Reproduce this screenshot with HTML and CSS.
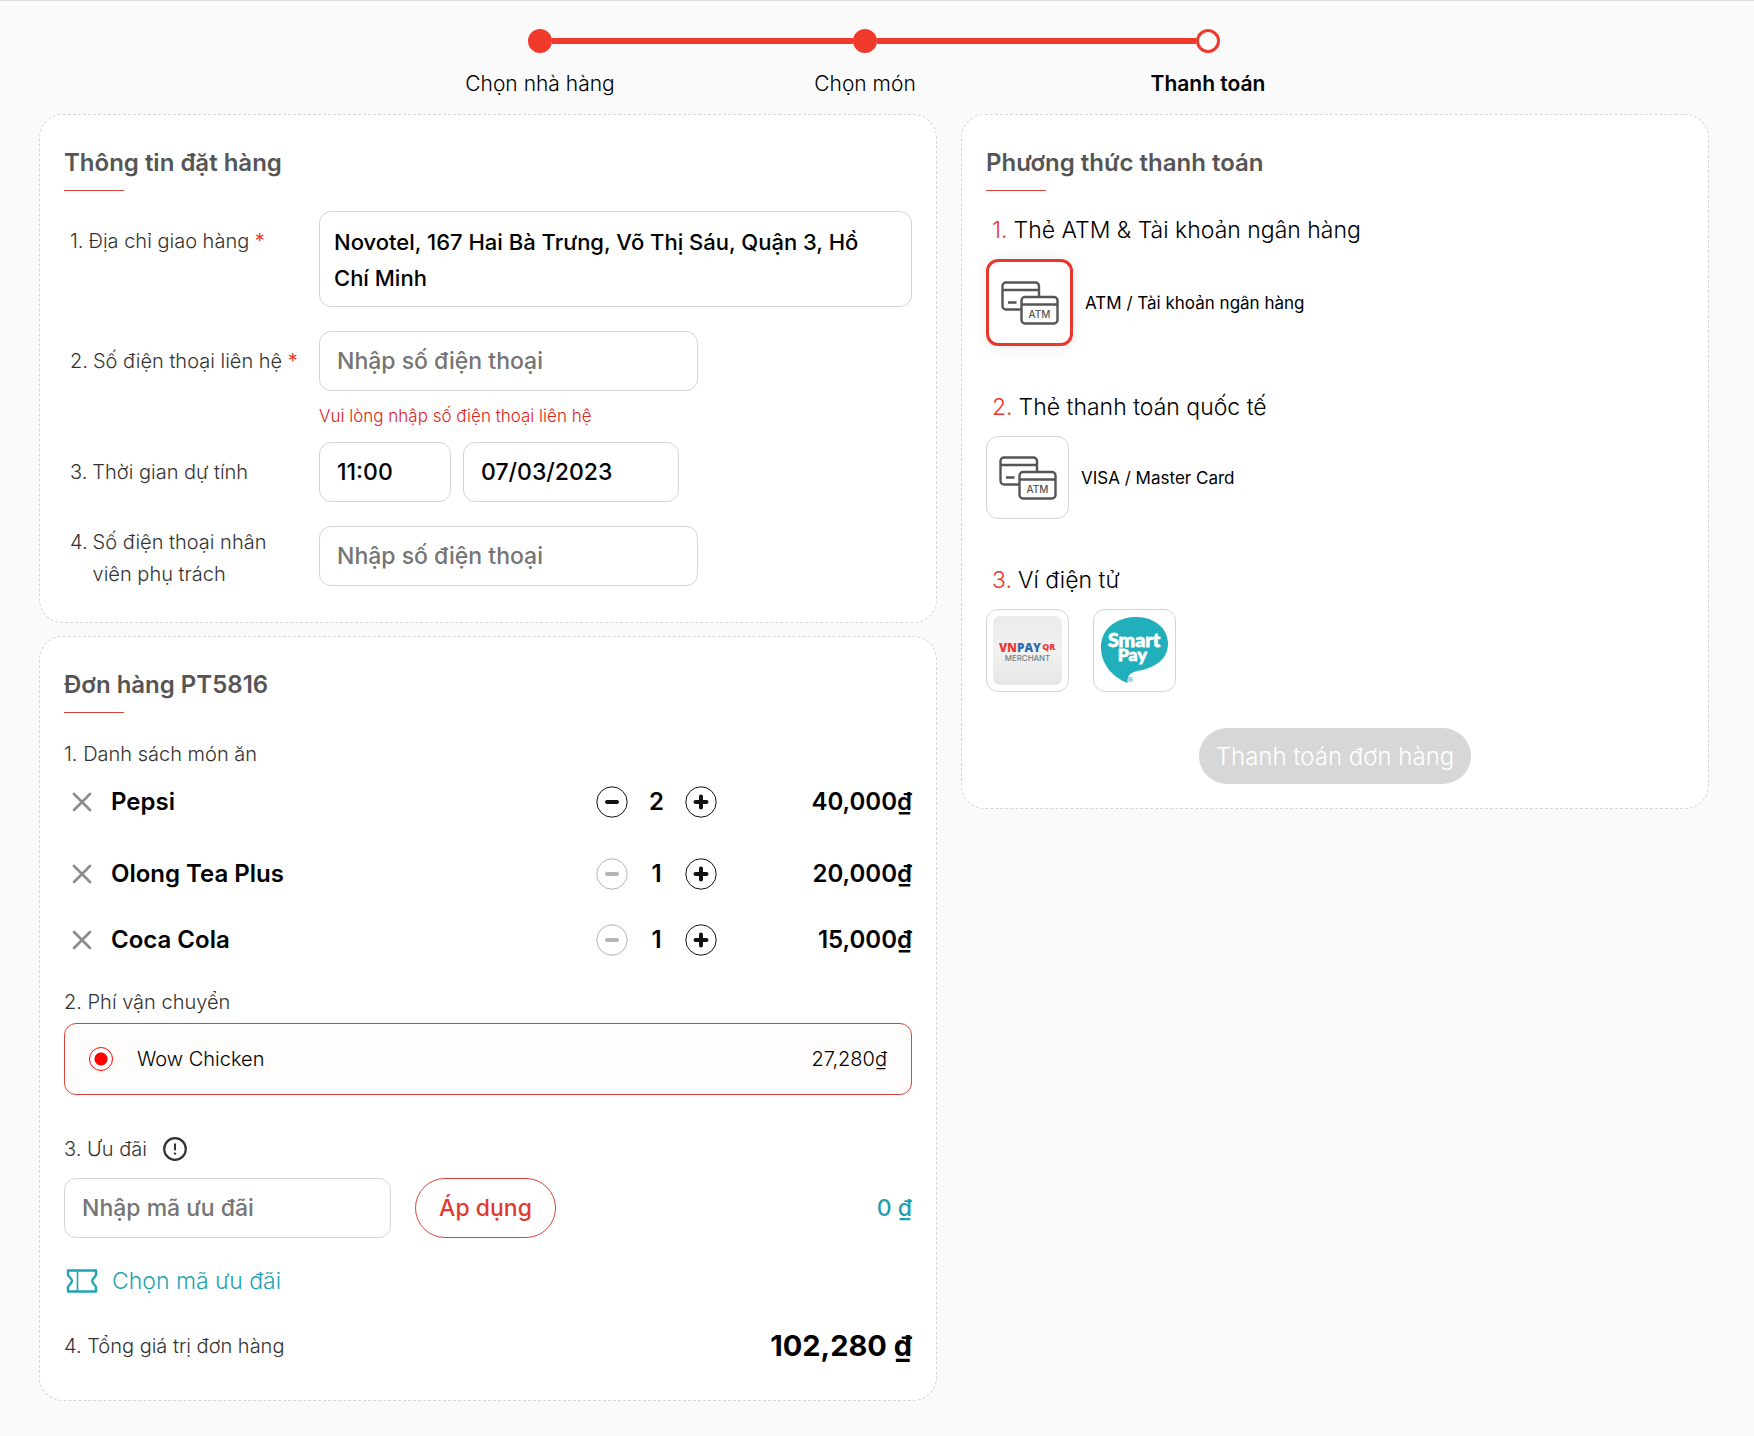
FILE: index.html
```html
<!DOCTYPE html>
<html lang="vi">
<head>
<meta charset="utf-8">
<meta name="viewport" content="width=device-width, initial-scale=1">
<title>Thanh toán</title>
<link rel="stylesheet" href="styles.css">
</head>
<body>
<svg class="sprite" aria-hidden="true">
  <symbol id="i-close" viewBox="0 0 20 20"><path d="M2 2l16 16M18 2L2 18" fill="none" stroke="currentColor" stroke-width="2.6" stroke-linecap="round"/></symbol>
  <symbol id="i-minus" viewBox="0 0 32 32"><circle cx="16" cy="16" r="15.2" fill="none" stroke="currentColor" stroke-width="1"/><path d="M11 16h10" stroke="currentColor" stroke-width="4" stroke-linecap="round"/></symbol>
  <symbol id="i-plus" viewBox="0 0 32 32"><circle cx="16" cy="16" r="15.2" fill="none" stroke="currentColor" stroke-width="1"/><path d="M10.500 16h11M16 10.500v11" stroke="currentColor" stroke-width="4" stroke-linecap="round"/></symbol>
  <symbol id="i-cards" viewBox="0 0 58 44">
    <g fill="none" stroke="#555" stroke-width="2.4">
      <path d="M20 28.500H5a3.500 3.500 0 0 1-3.500-3.500V5A3.500 3.500 0 0 1 5 1.500h29.500A3.500 3.500 0 0 1 38 5v10.500M1.500 9H38M7 21.500h8.500"/>
      <rect x="20.500" y="16" width="36" height="26.500" rx="3.500"/>
      <path d="M20.500 23.500h36"/>
    </g>
    <text x="38.500" y="37" text-anchor="middle" font-family="Inter, sans-serif" font-size="10" font-weight="500" fill="#555">ATM</text>
  </symbol>
</svg>

<main class="page">
  <ol class="stepper">
    <li class="step"><span class="track"><i class="dot"></i></span>Chọn nhà hàng</li>
    <li class="step"><span class="track"><i class="dot"></i></span>Chọn món</li>
    <li class="step current"><span class="track"><i class="dot"></i></span>Thanh toán</li>
  </ol>

  <div class="columns">
    <div class="column">
      <section class="card">
        <h2 class="title">Thông tin đặt hàng</h2>
        <form class="form">
          <label class="label" for="address"><span>1.</span><span>Địa chỉ giao hàng <b class="req">*</b></span></label>
          <textarea class="input address" id="address" rows="2">Novotel, 167 Hai Bà Trưng, Võ Thị Sáu, Quận 3, Hồ Chí Minh</textarea>

          <label class="label" for="phone"><span>2.</span><span>Số điện thoại liên hệ <b class="req">*</b></span></label>
          <div class="field">
            <input class="input phone" id="phone" type="tel" placeholder="Nhập số điện thoại">
            <p class="error">Vui lòng nhập số điện thoại liên hệ</p>
          </div>

          <label class="label" for="time"><span>3.</span><span>Thời gian dự tính</span></label>
          <div class="times">
            <input class="input time" id="time" type="text" value="11:00">
            <input class="input date" type="text" value="07/03/2023" aria-label="Ngày">
          </div>

          <label class="label two-line" for="staff"><span>4.</span><span>Số điện thoại nhân viên phụ trách</span></label>
          <input class="input phone" id="staff" type="tel" placeholder="Nhập số điện thoại">
        </form>
      </section>

      <section class="card order">
        <h2 class="title">Đơn hàng PT5816</h2>
        <h3 class="sub">1. Danh sách món ăn</h3>
        <ul class="items">
          <li class="item first">
            <button class="icon-btn remove" aria-label="Xóa Pepsi"><svg><use href="#i-close"/></svg></button>
            <span class="name">Pepsi</span>
            <button class="icon-btn qty-btn" aria-label="Giảm"><svg><use href="#i-minus"/></svg></button>
            <span class="qty">2</span>
            <button class="icon-btn qty-btn" aria-label="Tăng"><svg><use href="#i-plus"/></svg></button>
            <span class="price">40,000₫</span>
          </li>
          <li class="item">
            <button class="icon-btn remove" aria-label="Xóa Olong Tea Plus"><svg><use href="#i-close"/></svg></button>
            <span class="name">Olong Tea Plus</span>
            <button class="icon-btn qty-btn" aria-label="Giảm" disabled><svg><use href="#i-minus"/></svg></button>
            <span class="qty">1</span>
            <button class="icon-btn qty-btn" aria-label="Tăng"><svg><use href="#i-plus"/></svg></button>
            <span class="price">20,000₫</span>
          </li>
          <li class="item">
            <button class="icon-btn remove" aria-label="Xóa Coca Cola"><svg><use href="#i-close"/></svg></button>
            <span class="name">Coca Cola</span>
            <button class="icon-btn qty-btn" aria-label="Giảm" disabled><svg><use href="#i-minus"/></svg></button>
            <span class="qty">1</span>
            <button class="icon-btn qty-btn" aria-label="Tăng"><svg><use href="#i-plus"/></svg></button>
            <span class="price">15,000₫</span>
          </li>
        </ul>

        <h3 class="sub">2. Phí vận chuyển</h3>
        <label class="shipping">
          <input class="radio" type="radio" name="shipping" checked>
          <span class="shop">Wow Chicken</span>
          <span>27,280₫</span>
        </label>

        <h3 class="sub promo-title"><label for="promo">3. Ưu đãi</label>
          <svg class="info" viewBox="0 0 24 24" aria-hidden="true"><circle cx="12" cy="12" r="10.800" fill="none" stroke="currentColor" stroke-width="2.200"/><path d="M12 6.500v6.800" stroke="currentColor" stroke-width="2"/><circle cx="12" cy="16.600" r="1.200" fill="currentColor"/></svg>
        </h3>
        <div class="promo">
          <input class="input code" id="promo" type="text" placeholder="Nhập mã ưu đãi">
          <button class="apply">Áp dụng</button>
          <span class="discount">0 ₫</span>
        </div>
        <a class="choose" href="#">
          <svg class="ticket" viewBox="0 0 32 24" aria-hidden="true"><path d="M2 1.500h28v4.500c0 1-3.800 3.500-3.800 6s3.800 5 3.800 6v4.500H2V18c0-1 4-3.500 4-6S2 7 2 6z" fill="none" stroke="currentColor" stroke-width="2.400" stroke-linejoin="round"/><path d="M11.500 1.500v21" stroke="currentColor" stroke-width="1.600"/></svg>
          Chọn mã ưu đãi
        </a>
        <div class="total"><h3 class="sub">4. Tổng giá trị đơn hàng</h3><strong class="sum">102,280 ₫</strong></div>
      </section>
    </div>

    <section class="card payment">
      <h2 class="title">Phương thức thanh toán</h2>
      <h3 class="method"><span class="num">1.</span><span>Thẻ ATM &amp; Tài khoản ngân hàng</span></h3>
      <div class="options">
        <label class="option"><span class="tile selected"><input class="tile-radio" type="radio" name="pay" checked><svg class="cards"><use href="#i-cards"/></svg></span>ATM / Tài khoản ngân hàng</label>
      </div>
      <h3 class="method"><span class="num">2.</span><span>Thẻ thanh toán quốc tế</span></h3>
      <div class="options">
        <label class="option"><span class="tile"><input class="tile-radio" type="radio" name="pay"><svg class="cards"><use href="#i-cards"/></svg></span>VISA / Master Card</label>
      </div>
      <h3 class="method"><span class="num">3.</span><span>Ví điện tử</span></h3>
      <div class="options wallets">
        <label class="tile"><input class="tile-radio" type="radio" name="pay" aria-label="VNPAY">
          <svg class="logo" viewBox="0 0 70 70" aria-hidden="true">
            <defs><linearGradient id="g" x1="0" y1="0" x2="0" y2="1"><stop offset="0" stop-color="#ebebeb"/><stop offset=".5" stop-color="#f1f1f1"/><stop offset="1" stop-color="#e6e6e6"/></linearGradient></defs>
            <rect width="70" height="70" rx="7" fill="url(#g)"/>
            <text x="6" y="37" font-family="Open Sans, sans-serif" font-size="12" font-weight="800" fill="#ec3a36">VN<tspan fill="#2c6cab">PAY</tspan></text>
            <text x="50" y="34" font-family="Open Sans, sans-serif" font-size="9" font-weight="800" fill="#ec3a36">QR</text>
            <text x="12" y="46" font-family="Inter, sans-serif" font-size="8" font-weight="500" fill="#6d8087">MERCHANT</text>
          </svg>
        </label>
        <label class="tile"><input class="tile-radio" type="radio" name="pay" aria-label="SmartPay">
          <svg class="logo" viewBox="0 0 70 70" aria-hidden="true">
            <path d="M35 1C54 0 69 12 69 28c0 15-12 24-27 27-9 1-15 4-14 13C12 62 1 48 1 32 1 14 15 2 35 1z" fill="#21afbb"/>
            <g font-family="Lato, sans-serif" font-weight="900" fill="#fff" stroke="#fff" stroke-width=".8">
              <text x="8" y="31" font-size="20">Smart</text>
              <text x="18" y="46" font-size="18">Pay</text>
            </g>
            <text x="28" y="68" font-family="Inter, sans-serif" font-size="8" font-weight="600" fill="#21afbb">®</text>
          </svg>
        </label>
      </div>
      <button class="submit" disabled>Thanh toán đơn hàng</button>
    </section>
  </div>
</main>
</body>
</html>
```
FILE: styles.css
```css
* { box-sizing: border-box; }
body {
  margin: 0;
  background: #fafafa;
  border-top: 1px solid #dcdcdc;
  color: #000;
  font: 300 20px/32px Inter, "Noto Sans", sans-serif;
}
h2, h3, p, ol, ul { margin: 0; padding: 0; list-style: none; }
h3 { font-weight: 300; }
button, input, textarea { font-family: inherit; }
.sprite { display: none; }
.page { padding: 28px 45px 36px 39px; }

.stepper {
  display: grid;
  grid-template-columns: 350fr 300fr 386fr;
  max-width: 1054px;
  margin: 0 auto 14px;
  padding-left: 18px;
  font-size: 21px;
}
.step { text-align: center; }
.current { font-weight: 600; }
.track { display: flex; align-items: center; margin-bottom: 15px; }
.track::before, .track::after { content: ""; flex: 1; height: 6px; background: #f03a2b; }
.step:first-child .track::before, .step:last-child .track::after { background: none; }
.dot { width: 24px; height: 24px; border: 3px solid #f03a2b; border-radius: 50%; background: #f03a2b; }
.current .dot { background: #fff; }

.columns { display: grid; grid-template-columns: 898fr 748fr; gap: 24px; align-items: start; }
.column { display: grid; gap: 13px; }
.card { background: #fff; border: 1px dashed #d6d6d6; border-radius: 24px; padding: 32px 24px 24px; }
.title { font-size: 24px; line-height: 32px; font-weight: 600; color: #555; }
.title::after { content: ""; display: block; width: 60px; height: 1px; margin-top: 11px; background: #d9433a; }

.form {
  display: grid;
  grid-template-columns: 243px 1fr;
  column-gap: 12px;
  row-gap: 24px;
  margin-top: 20px;
  padding-bottom: 8px;
}
.label { display: flex; gap: 5px; padding: 14px 0 0 6px; color: #333; }
.two-line { padding-top: 0; }
.req { color: #f03a2b; font-weight: 400; }
.input {
  display: block;
  height: 60px;
  padding: 0 17px;
  border: 1px solid #d4d4d4;
  border-radius: 12px;
  background: #fff;
  color: #000;
  font-size: 23px;
  font-weight: 500;
}
.input::placeholder { color: #757575; opacity: 1; }
.address { width: 100%; height: 96px; padding: 12px 14px; font-size: 22px; line-height: 36px; resize: none; overflow: hidden; }
.phone { width: 379px; }
.error { height: 27px; padding-top: 9px; font-size: 17px; line-height: 32px; color: #e0241b; }
.times { display: flex; gap: 12px; }
.time { width: 132px; }
.date { width: 216px; }

.order { padding-bottom: 38px; }
.sub { color: #333; font-size: 20px; line-height: 32px; }
.order > .title + .sub { margin-top: 25px; }
.items { margin: 12px 0 26px; }
.item { display: flex; align-items: center; height: 40px; margin-bottom: 26px; font-size: 24px; font-weight: 600; }
.item.first { margin-bottom: 32px; }
.item:last-child { margin-bottom: 0; }
.icon-btn { display: block; padding: 0; border: 0; background: none; color: #111; }
.icon-btn svg { display: block; width: 100%; height: 100%; }
.icon-btn:disabled { color: #b5b5b5; }
.remove { width: 20px; height: 20px; margin: 0 19px 0 8px; color: #8c8c8c; }
.name { flex: 1; }
.qty-btn { width: 32px; height: 32px; }
.qty { width: 57px; text-align: center; }
.price { width: 195px; text-align: right; }

.shipping {
  display: flex;
  align-items: center;
  height: 72px;
  margin-top: 5px;
  padding: 0 24px;
  border: 1px solid #d9433a;
  border-radius: 12px;
  background: #fffcfc;
}
.radio { appearance: none; width: 24px; height: 24px; margin: 0 24px 0 0; border: 1px solid #f00; border-radius: 50%; background: radial-gradient(circle, #f00 6px, #fff 7px); }
.shop { flex: 1; }
.promo-title { display: flex; align-items: center; gap: 16px; margin-top: 38px; }
.info { width: 24px; height: 24px; }
.promo { display: flex; align-items: center; gap: 24px; margin-top: 13px; }
.code { width: 327px; }
.apply { width: 141px; height: 60px; padding: 0; border: 1px solid #d9433a; border-radius: 30px; background: #fff; color: #e03a2f; font-size: 23px; font-weight: 500; }
.discount { margin-left: auto; color: #1e9fb0; font-size: 23px; font-weight: 500; }
.choose { display: inline-flex; align-items: center; gap: 14px; margin: 27px 0 0 2px; color: #1fa3b3; font-size: 23px; line-height: 32px; text-decoration: none; }
.ticket { width: 32px; height: 24px; }
.total { display: flex; justify-content: space-between; align-items: center; margin-top: 28px; }
.sum { font-size: 29px; font-weight: 700; }

.method { display: flex; gap: 6px; margin-top: 23px; padding-left: 6px; font-size: 23px; line-height: 32px; }
.num { color: #e8382d; }
.options { display: flex; gap: 24px; margin: 13px 0 45px; }
.option { display: flex; align-items: center; gap: 12px; font-size: 17px; font-weight: 400; }
.tile { position: relative; display: grid; place-items: center; width: 83px; height: 83px; border: 1px solid #d4d4d4; border-radius: 12px; background: #fff; }
.selected { width: 87px; height: 87px; border: 3px solid #e8382d; box-shadow: 0 2px 16px rgba(0, 0, 0, .08); }
.tile-radio { position: absolute; inset: 0; width: 100%; height: 100%; margin: 0; opacity: 0; }
.cards { width: 58px; height: 44px; }
.logo { width: 69px; height: 69px; }
.wallets { margin-bottom: 36px; }
.submit { display: block; height: 56px; margin: 0 auto; padding: 0 17px; border: 0; border-radius: 28px; background: #d7d7d7; color: #fff; font-size: 24px; font-weight: 300; }
```
